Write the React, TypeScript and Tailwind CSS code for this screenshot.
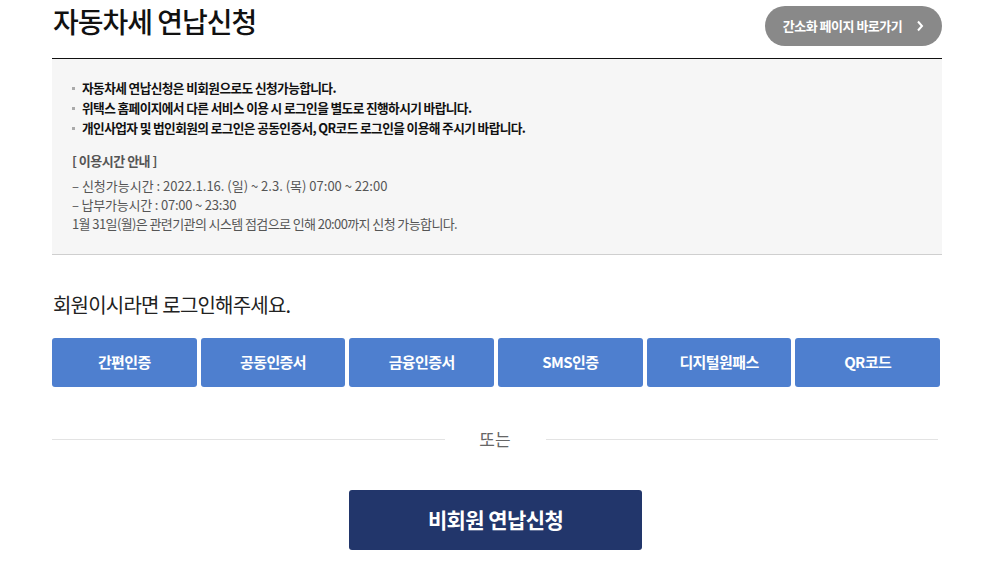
import React from 'react';

const methods = ['간편인증', '공동인증서', '금융인증서', 'SMS인증', '디지털원패스', 'QR코드'];

const notices = [
  '자동차세 연납신청은 비회원으로도 신청가능합니다.',
  '위택스 홈페이지에서 다른 서비스 이용 시 로그인을 별도로 진행하시기 바랍니다.',
  '개인사업자 및 법인회원의 로그인은 공동인증서, QR코드 로그인을 이용해 주시기 바랍니다.',
];

export default function App() {
  return (
    <div className="min-h-screen bg-white font-['Noto_Sans_CJK_KR',sans-serif] text-[#111]">
      <div className="ml-[52px] w-[890px]">
        {/* Header */}
        <div className="flex items-start justify-between h-[59px] border-b border-[#111]">
          <h1 className="pt-[2px] pl-px text-[28px] leading-[38px] font-medium tracking-[-1px]">자동차세 연납신청</h1>
          <button className="mt-[6px] flex items-center gap-[14px] h-[40px] w-[177px] justify-center rounded-full bg-[#898989] text-white text-[13px] font-bold tracking-[-0.5px]">
            <span>간소화 페이지 바로가기</span>
            <svg width="8" height="12" viewBox="0 0 8 12" fill="none">
              <path d="M2 1.5L6 6L2 10.5" stroke="white" strokeWidth="2" />
            </svg>
          </button>
        </div>

        {/* Notice box */}
        <div className="bg-[#f6f6f6] border-b border-[#cfcfcf] pl-[20px] pt-[19px] pb-[21px]">
          <ul className="flex flex-col">
            {notices.map((n) => (
              <li key={n} className="flex items-center h-[20px] text-[12.7px] font-bold tracking-[-0.6px] text-[#111]">
                <span className="w-[3px] h-[3px] bg-[#aaa] mr-[7px]" />
                {n}
              </li>
            ))}
          </ul>
          <p className="mt-[13px] text-[13px] font-bold text-[#555] tracking-[-0.5px] leading-[20px]">[ 이용시간 안내 ]</p>
          <div className="mt-[5px] text-[13px] text-[#555] leading-[19px]">
            <p className="tracking-[0px]">– 신청가능시간 : 2022.1.16. (일) ~ 2.3. (목) 07:00 ~ 22:00</p>
            <p className="tracking-[-0.2px]">– 납부가능시간 : 07:00 ~ 23:30</p>
            <p className="tracking-[-0.6px]">1월 31일(월)은 관련기관의 시스템 점검으로 인해 20:00까지 신청 가능합니다.</p>
          </div>
        </div>

        {/* Login */}
        <p className="mt-[36px] pl-px text-[20px] leading-[28px] text-[#222] tracking-[-0.8px]">회원이시라면 로그인해주세요.</p>
        <div className="mt-[19px] grid grid-cols-6 gap-[4px] pr-[2px]">
          {methods.map((m) => (
            <button
              key={m}
              className="h-[49px] rounded-[3px] bg-[#4e7fcf] text-white text-[15px] font-bold tracking-[-0.6px]"
            >
              {m}
            </button>
          ))}
        </div>

        {/* Or */}
        <div className="mt-[40px] flex items-center">
          <div className="flex-1 h-px bg-[#e3e3e3]" />
          <span className="w-[101px] text-center text-[17px] text-[#666] leading-[24px]">또는</span>
          <div className="flex-1 h-px bg-[#e3e3e3] mr-[4px]" />
        </div>

        <div className="mt-[39px] flex justify-center pr-[3px]">
          <button className="h-[60px] w-[293px] rounded-[3px] bg-[#22366b] text-white text-[21px] font-bold tracking-[-0.6px]">
            비회원 연납신청
          </button>
        </div>
      </div>
    </div>
  );
}
